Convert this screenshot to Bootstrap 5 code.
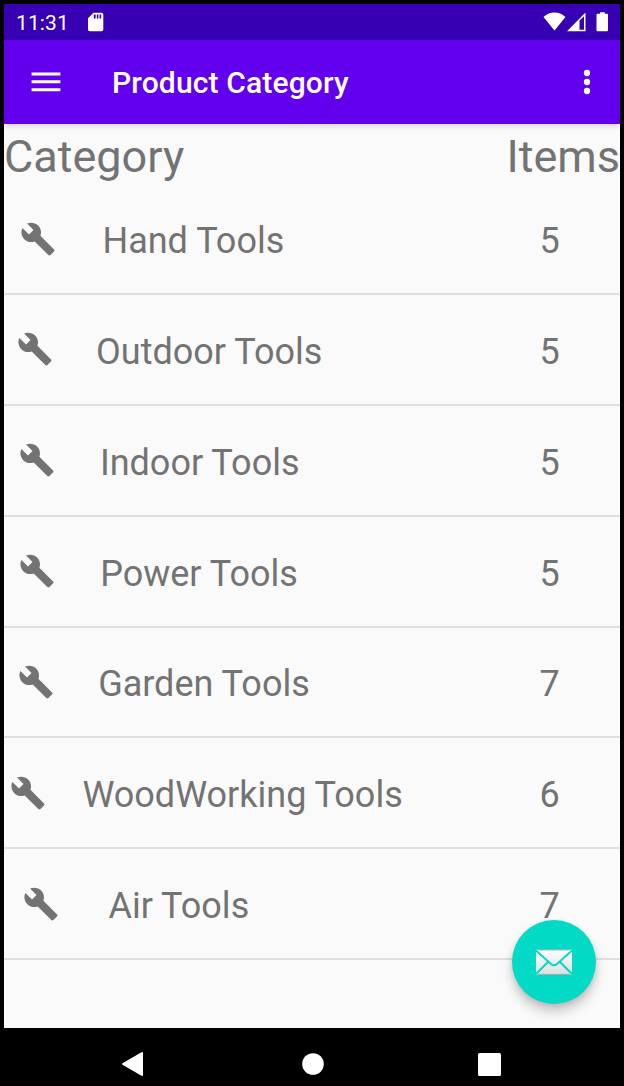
<!DOCTYPE html>
<html lang="en">
<head>
<meta charset="utf-8">
<meta name="viewport" content="width=device-width, initial-scale=1">
<title>Product Category</title>
<link href="https://cdn.jsdelivr.net/npm/bootstrap@5.3.0/dist/css/bootstrap.min.css" rel="stylesheet">
<style>
  body { font-family: Roboto, "Liberation Sans", sans-serif; background: #000; }
  svg { display: block; flex: none; }
  .device { height: 1086px; padding: 4px 4px 0; }
  .status-bar { height: 36px; background: #3700b3; font-size: 21px; line-height: 36px; padding: 0 10px 0 12px; }
  .clock { width: 71px; padding-top: 1px; letter-spacing: .1px; }
  .app-bar { height: 84px; background: #6200ee; box-shadow: 0 2px 6px rgba(0,0,0,.17); padding: 0 15px 0 23.5px; z-index: 2; }
  .app-title { font-size: 30px; font-weight: 500; line-height: 36px; letter-spacing: .15px; margin: 1px 0 0 48.5px; }
  .screen { height: 904px; background: #fafafa; color: #737373; }
  .list-head { height: 60.2px; font-size: 45px; line-height: 53px; padding-top: 6px; }
  .tool-row { height: 110.83px; border-bottom: 2px solid #dfdfdf; }
  .tool-cell { width: 473px; }
  .gap-start { flex: .069 0 .4px; }
  .gap-mid { flex: .076 0 29.4px; }
  .gap-end { flex: .855 0 0; }
  .tool-text { font-size: 36px; line-height: 42px; padding-top: 5px; white-space: nowrap; }
  .tool-count { padding-left: 2px; }
  .fab { width: 84px; height: 84px; right: 24px; bottom: 24px; background: #03dac5; box-shadow: 0 8px 12px rgba(0,0,0,.2), 0 2px 5px rgba(0,0,0,.1); }
  .nav-keys { height: 58px; padding: 14px 119px 0 117px; }
</style>
</head>
<body>
<svg width="0" height="0" class="position-absolute" aria-hidden="true">
  <symbol id="wrench" viewBox="0 0 24 24"><path fill="#737373" d="M22.7 19l-9.1-9.1c.9-2.3.4-5-1.5-6.9-2-2-5-2.4-7.4-1.3L9 6 6 9 1.6 4.7C.4 7.1.9 10.1 2.9 12.1c1.9 1.9 4.6 2.4 6.9 1.5l9.1 9.1c.4.4 1 .4 1.4 0l2.3-2.3c.5-.4.5-1.1.1-1.4z"/></symbol>
</svg>
<div class="device d-flex flex-column overflow-hidden">
  <div class="status-bar d-flex align-items-center text-white">
    <div class="clock">11:31</div>
    <svg width="18" height="20" viewBox="0 0 18 20"><path fill="#fff" fill-rule="evenodd" d="M6.500 .8H14.500Q16.300 .8 16.300 2.500V17.500Q16.300 19.300 14.500 19.300H2.500Q1 19.300 1 17.500V6.300ZM6.800 2.500V6.500H8.600V2.500ZM9.800 2.500V6.500H11.400V2.500ZM12.600 2.500V6.500H14.200V2.500Z"/></svg>
    <div class="ms-auto d-flex">
      <svg width="24" height="20" viewBox="0 0 24 20"><path fill="#fff" d="M.5 5Q5.500 .6 11.500 .6T22.500 5L11.500 18.600Z"/></svg>
      <svg width="20" height="20" viewBox="0 0 20 20"><path fill="#fff" fill-rule="evenodd" d="M0 19.300L18.500 .5V19.300ZM12.500 8.500V17.800H17V4.200Z"/></svg>
      <svg class="ms-2" width="15" height="20" viewBox="0 0 15 20"><path fill="#fff" d="M5 0.300H9.800V1.700H12Q13 1.700 13 2.700V18.300Q13 19.300 12 19.300H2.500Q1.500 19.300 1.500 18.300V2.700Q1.500 1.700 2.500 1.700H5Z"/></svg>
    </div>
  </div>
  <nav class="app-bar d-flex align-items-center text-white position-relative">
    <svg width="36" height="36" viewBox="0 0 24 24"><path fill="#fff" d="M2.400 18.200h19.200v-2H2.400zM2.400 12.900h19.200v-2H2.400zM2.400 5.700v2h19.200v-2z"/></svg>
    <h1 class="app-title mb-0">Product Category</h1>
    <svg class="ms-auto" width="36" height="36" viewBox="0 0 24 24"><g fill="#fff"><circle cx="12" cy="6" r="2.100"/><circle cx="12" cy="12" r="2.100"/><circle cx="12" cy="18" r="2.100"/></g></svg>
  </nav>
  <main class="screen position-relative">
    <div class="list-head d-flex justify-content-between"><span>Category</span><span>Items</span></div>
    <div class="tool-row d-flex align-items-center"><div class="tool-cell d-flex align-items-center"><i class="gap-start"></i><svg width="36" height="36"><use href="#wrench"/></svg><i class="gap-mid"></i><span class="tool-text">Hand Tools</span><i class="gap-end"></i></div><div class="tool-count tool-text flex-fill text-center">5</div></div>
    <div class="tool-row d-flex align-items-center"><div class="tool-cell d-flex align-items-center"><i class="gap-start"></i><svg width="36" height="36"><use href="#wrench"/></svg><i class="gap-mid"></i><span class="tool-text">Outdoor Tools</span><i class="gap-end"></i></div><div class="tool-count tool-text flex-fill text-center">5</div></div>
    <div class="tool-row d-flex align-items-center"><div class="tool-cell d-flex align-items-center"><i class="gap-start"></i><svg width="36" height="36"><use href="#wrench"/></svg><i class="gap-mid"></i><span class="tool-text">Indoor Tools</span><i class="gap-end"></i></div><div class="tool-count tool-text flex-fill text-center">5</div></div>
    <div class="tool-row d-flex align-items-center"><div class="tool-cell d-flex align-items-center"><i class="gap-start"></i><svg width="36" height="36"><use href="#wrench"/></svg><i class="gap-mid"></i><span class="tool-text">Power Tools</span><i class="gap-end"></i></div><div class="tool-count tool-text flex-fill text-center">5</div></div>
    <div class="tool-row d-flex align-items-center"><div class="tool-cell d-flex align-items-center"><i class="gap-start"></i><svg width="36" height="36"><use href="#wrench"/></svg><i class="gap-mid"></i><span class="tool-text">Garden Tools</span><i class="gap-end"></i></div><div class="tool-count tool-text flex-fill text-center">7</div></div>
    <div class="tool-row d-flex align-items-center"><div class="tool-cell d-flex align-items-center"><i class="gap-start"></i><svg width="36" height="36"><use href="#wrench"/></svg><i class="gap-mid"></i><span class="tool-text">WoodWorking Tools</span><i class="gap-end"></i></div><div class="tool-count tool-text flex-fill text-center">6</div></div>
    <div class="tool-row d-flex align-items-center"><div class="tool-cell d-flex align-items-center"><i class="gap-start"></i><svg width="36" height="36"><use href="#wrench"/></svg><i class="gap-mid"></i><span class="tool-text">Air Tools</span><i class="gap-end"></i></div><div class="tool-count tool-text flex-fill text-center">7</div></div>
    <button class="fab btn border-0 rounded-circle p-0 position-absolute d-flex align-items-center justify-content-center" aria-label="Mail">
      <svg width="36" height="26" viewBox="0 0 36 26"><defs><linearGradient id="paper" x1="0" y1="0" x2="0" y2="1"><stop offset="0" stop-color="#fff"/><stop offset="1" stop-color="#dedede"/></linearGradient></defs><path fill="url(#paper)" d="M0 .8H36V25.800H0Z"/><path fill="none" stroke="#03dac5" stroke-width="2" d="M0 1.500L15 15Q18 17.500 21 15L36 1.500M0 25L12 13M36 25L24 13"/><path stroke="#888" stroke-width=".9" d="M2 25.400H34M3 1H33" opacity=".65"/></svg>
    </button>
  </main>
  <footer class="nav-keys d-flex align-items-center justify-content-between">
    <svg width="22" height="26" viewBox="0 0 22 26"><path fill="#fff" stroke="#fff" stroke-width="2" stroke-linejoin="round" d="M21 2V24L2 13Z"/></svg>
    <svg class="ms-1" width="22" height="22" viewBox="0 0 22 22"><circle cx="11" cy="11" r="10.800" fill="#fff"/></svg>
    <svg width="23" height="23" viewBox="0 0 23 23"><rect width="23" height="23" rx="1.500" fill="#fff"/></svg>
  </footer>
</div>
<script src="https://cdn.jsdelivr.net/npm/bootstrap@5.3.0/dist/js/bootstrap.bundle.min.js"></script>
</body>
</html>
